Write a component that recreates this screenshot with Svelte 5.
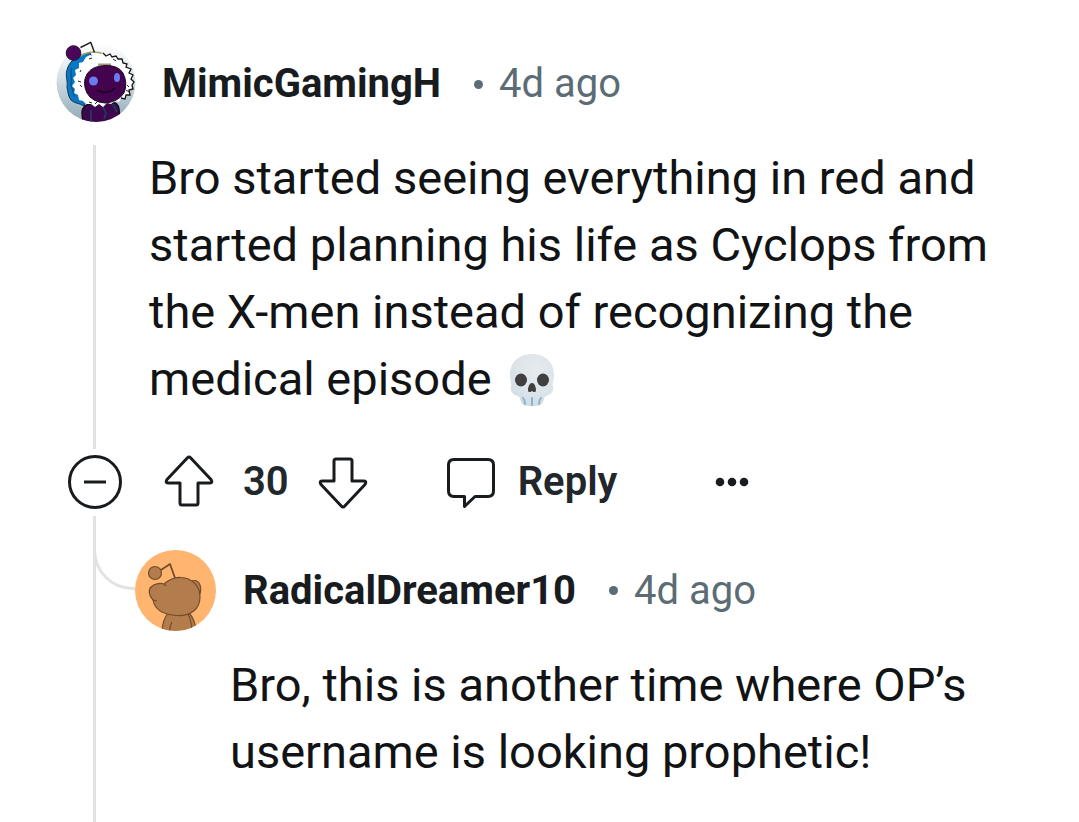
<script>
  let votes = $state(30);
</script>

<main>
  <article class="comment">
    <div class="avatar">
      <svg viewBox="0 0 81 81" width="81" height="81" aria-hidden="true">
        <defs>
          <linearGradient id="sky" x1="0" y1="0" x2="0" y2="1">
            <stop offset="0" stop-color="#ffffff" />
            <stop offset=".3" stop-color="#e6ecef" />
            <stop offset="1" stop-color="#8fa9b8" />
          </linearGradient>
          <clipPath id="disc"><path d="M-10-10H95V40.500H81.500A39.500 39.500 0 0 1 2.500 40.500H-10Z" /></clipPath>
        </defs>
        <circle cx="42" cy="40.500" r="39.500" fill="url(#sky)" />
        <g clip-path="url(#disc)">
          <path d="M36 11C24 12 15 19 13 28C11 34 14 38 13 45C14 50 14 54 17 58C21 62 26 61 30 64L45 30Z" fill="#0878c5" stroke="#17344e" stroke-width="1" />
          <path d="M18 26C15 31 19 34 17 40C16 46 21 49 20 55" fill="none" stroke="#075492" stroke-width="1.500" />
          <path d="M29 84L28 70Q29 63 36 62L58 61Q64 60 65 67L67 84Z" fill="#3d064d" stroke="#170b20" stroke-width="1.500" />
          <path d="M48 63L52 71L50 77M59 62L63 70M37 68V82" fill="none" stroke="#26335f" stroke-width="2" />
        </g>
        <path d="M26 14Q38 7 50 12" fill="none" stroke="#a5a46d" stroke-width="1.500" />
        <path d="M26.500 5.500L36.700 .3L40.500 10.500" fill="none" stroke="#222" stroke-width="1.500" stroke-linejoin="round" />
        <circle cx="19.500" cy="11" r="7.300" fill="#480759" stroke="#281032" stroke-width="1" />
        <path d="M32 15L36 13L39 14L42 12L45 13L49 11L52 14L56 12L58 15L62 14L64 17L68 17L69 21L73 22L72 25L77 27L75 31L79 33L77 37L80 40L78 43L79 47L75 48L76 53L72 53L71 57L67 56L65 60L61 59L57 62L53 61L49 65L45 62L41 65L37 62L32 62L29 59L25 58L24 53L20 51L21 47L18 44L21 40L19 36L22 33L21 28L25 26L25 21L29 20Z" fill="#fff" />
        <path d="M49 11L52 14L56 12L58 15L62 14L64 17L68 17L69 21L73 22L72 25L77 27L75 31L79 33L77 37L80 40L78 43L79 47L75 48L76 53L72 53L71 57L67 56" fill="none" stroke="#161616" stroke-width="1.300" />
        <path d="M24 39L27 40M26 43L28 45M35 17L38 16M59 17L62 19M73 43L75 45M72 48L75 50M35 60L38 61M41 62L43 60M26 30L27 28" fill="none" stroke="#25202a" stroke-width="1" />
        <path d="M44 22.500H57" stroke="#a19978" stroke-width="2" />
        <path d="M33 32Q38 24 51 23.500Q64 23 69 31Q74 41 70 51Q64 60 51 61Q38 60 33 51Q28 41 33 32Z" fill="#44034f" stroke="#1f0b26" stroke-width="1" />
        <circle cx="39.500" cy="39" r="4.500" fill="#6a7af0" />
        <ellipse cx="63" cy="35.500" rx="3" ry="4.500" fill="#6a7af0" />
        <path d="M44 48.500Q54 53 61 46" fill="none" stroke="#17051e" stroke-width="1.500" stroke-linecap="round" />
      </svg>
    </div>
    <header><a class="name" href="#mimic">MimicGamingH</a><span class="dot"></span><time>4d ago</time></header>
    <div class="line upper"></div>
    <p>
      Bro started seeing everything in red and started planning his life as Cyclops from the X-men instead of recognizing the medical episode
      <svg class="skull" viewBox="0 0 46 54" width="46" height="54" role="img" aria-label="skull">
        <defs>
          <radialGradient id="bone" cx=".6" cy=".3" r=".75">
            <stop offset="0" stop-color="#e5eaed" />
            <stop offset=".6" stop-color="#dde5ea" />
            <stop offset="1" stop-color="#cfdce4" />
          </radialGradient>
        </defs>
        <path d="M23 1C9 1 1 10 1 22C1 27 3 30 2 34C1 39 5 42 9 43C11 44 11 46 12 49C13 52 16 53 23 53S33 52 34 49C35 46 35 44 37 43C41 42 45 39 44 34C43 30 45 27 45 22C45 10 37 1 23 1Z" fill="url(#bone)" />
        <ellipse cx="12" cy="27" rx="6" ry="6.500" fill="#404040" />
        <ellipse cx="34" cy="27" rx="6" ry="6.500" fill="#404040" />
        <path d="M23 30C20 30 19 35 19 37C19 40 22 39 23 38C24 39 27 40 27 37C27 35 26 30 23 30Z" fill="#404040" />
        <path d="M14 45Q16 47 16 51M23 45V52M32 45Q30 47 30 51" fill="none" stroke="#8bb5ca" stroke-width="2" stroke-linecap="round" />
      </svg>
    </p>
    <button class="toggle" aria-label="Collapse thread">
      <svg viewBox="0 0 54 54" width="54" height="54"><circle cx="27" cy="27" r="25.500" /><path d="M16 27H38" /></svg>
    </button>
    <div class="actions">
      <button aria-label="Upvote" onclick={() => votes++}>
        <svg viewBox="0 0 50 54" width="50" height="54"><path d="M23.500 2.800Q25 1.200 26.500 2.800L47 24.500Q49 28 46 28H34V48Q34 50 32 50H18Q16 50 16 48V28H4Q1 28 3 24.500Z" /></svg>
      </button>
      <span class="count">{votes}</span>
      <button aria-label="Downvote" onclick={() => votes--}>
        <svg viewBox="0 0 50 54" width="50" height="54"><path d="M23.500 51.200Q25 52.800 26.500 51.200L47 29.500Q49 26 46 26H34V6Q34 4 32 4H18Q16 4 16 6V26H4Q1 26 3 29.500Z" /></svg>
      </button>
      <button class="reply">
        <svg viewBox="0 0 50 54" width="50" height="54"><path d="M8 4.500H42Q47.500 4.500 47.500 10V36Q47.500 41.500 42 41.500H29L18.500 51.500V41.500H8Q2.500 41.500 2.500 36V10Q2.500 4.500 8 4.500Z" /></svg>
        Reply
      </button>
      <button class="more" aria-label="More options">
        <svg viewBox="0 0 34 54" width="34" height="54"><circle cx="5" cy="27" r="4.300" /><circle cx="17" cy="27" r="4.300" /><circle cx="29" cy="27" r="4.300" /></svg>
      </button>
    </div>
    <div class="line lower"></div>
    <section class="replies">
      <article class="comment nested">
        <svg class="elbow" viewBox="0 0 44 48" width="44" height="48" aria-hidden="true"><path d="M1.500 0A38.500 38.500 0 0 0 40 38.500H42" /></svg>
        <div class="avatar">
          <svg viewBox="0 0 81 81" width="81" height="81" aria-hidden="true">
            <clipPath id="round"><circle cx="40.500" cy="40.500" r="40.500" /></clipPath>
            <circle cx="40.500" cy="40.500" r="40.500" fill="#ffb470" />
            <g clip-path="url(#round)" fill="#b27c4c" stroke="#744c2b" stroke-width="1.200" stroke-linejoin="round">
              <path d="M27 84C27 73 29 68 33 63H54C59 68 61 75 61 84Z" />
              <path d="M37 72Q34 77 35 84M53 64Q57 71 57 84" fill="none" />
              <path d="M56 31Q63 29 65 35Q67 40 64 46Z" />
              <path d="M29 34C35 29 41 27 46 27.500C58 28 65 37 65 47C65 59 56 66 42 65.500C29 65 20 60 18 50C14 46 13 40 16 37C20 33 26 33 29 34Z" />
              <path d="M29 34L31 36M18 50L22 51" fill="none" />
              <path d="M26 20L35 14L40 28" fill="none" stroke-width="1.800" />
              <circle cx="20" cy="23" r="6.500" />
            </g>
          </svg>
        </div>
        <header><a class="name" href="#radical">RadicalDreamer10</a><span class="dot"></span><time>4d ago</time></header>
        <p>Bro, this is another time where OP’s username is looking prophetic!</p>
      </article>
    </section>
  </article>
</main>

<style>
  :global(body) { margin: 0; background: #fff; }
  main {
    box-sizing: border-box;
    min-height: 100vh;
    display: flex;
    padding: 42px 54px 0;
    font-family: Roboto, sans-serif;
    color: #111314;
  }
  .comment {
    flex: 1;
    display: grid;
    grid-template-columns: 81px 1fr;
    grid-template-rows: 81px auto auto 1fr;
  }
  .nested { position: relative; grid-template-rows: 81px auto; }
  svg { display: block; overflow: visible; }
  header { display: flex; align-items: center; padding: 3px 0 0 27px; font-size: 40px; line-height: 48px; }
  .nested header { padding-top: 0; }
  .name { font-weight: 700; color: #181c1f; text-decoration: none; }
  .dot { width: 9px; height: 9px; border-radius: 50%; background: #5c6c74; margin: 0 16px 0 33px; }
  time { color: #5c6c74; }
  p { grid-column: 2; margin: 0; padding: 21px 0 0 14px; font-size: 47px; line-height: 67px; }
  .nested p { padding-top: 20px; }
  .skull { display: inline-block; vertical-align: -12px; margin: -8px 0 0 6px; }
  .line { width: 3px; justify-self: center; background: #e2e2e2; }
  .upper { margin: 22px 0 6px; }
  .upper + p { padding-bottom: 43px; }
  .lower { margin-top: 7px; }
  button { display: flex; align-items: center; margin: 0; padding: 0; border: 0; background: none; color: #21272a; font: 600 40px/48px Roboto, sans-serif; cursor: pointer; }
  button svg { fill: none; stroke: #181c1f; stroke-width: 3; stroke-linejoin: round; }
  .toggle { justify-self: center; }
  .actions { display: flex; align-items: center; padding-left: 29px; }
  .count { margin: 0 29px; font-size: 40px; line-height: 48px; font-weight: 600; color: #21272a; }
  .reply { margin-left: 78px; gap: 22px; }
  .more { margin-left: 98px; }
  .more svg { fill: #181c1f; stroke: none; }
  .replies { padding-top: 41px; }
  .elbow { position: absolute; left: -42px; top: 0; fill: none; stroke: #e2e2e2; stroke-width: 3; }
</style>
